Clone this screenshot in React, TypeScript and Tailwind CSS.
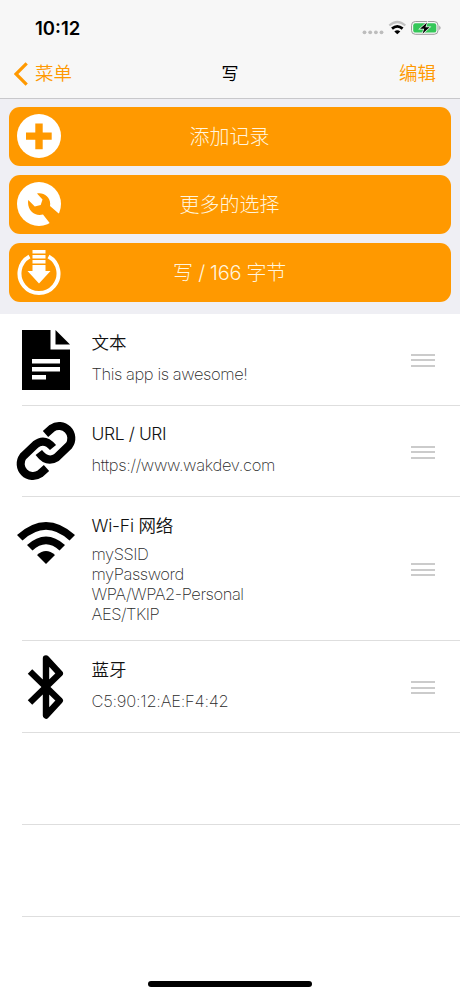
import type { ReactNode } from "react";

function PlusIcon() {
  return (
    <svg viewBox="0 0 44 44" className="size-11">
      <circle cx="22" cy="22" r="22" fill="#fff" />
      <path d="M18.3 9.5h7.4v9.1h9v7.2h-9v9.4h-7.4v-9.4H9v-7.2h9.3z" fill="#ff9900" />
    </svg>
  );
}

function WrenchIcon() {
  return (
    <svg viewBox="0 0 44 44" className="size-11">
      <circle cx="22" cy="22" r="22" fill="#fff" />
      <path d="M20 11.500C27 10 34.500 15.500 33 24L44.500 34 35 44 26 32.500C17.500 35 9.500 27.500 11.300 18L17.800 24.500 23.700 23 25.500 17.500z" fill="#ff9900" />
    </svg>
  );
}

function DownloadIcon() {
  return (
    <svg viewBox="0 0 44 46" className="h-[46px] w-11">
      <path d="M12.500 6.500A19.500 19.500 0 1 0 31.500 6.500" fill="none" stroke="#fff" strokeWidth="4" />
      <path d="M15.500 0h13v3.500h-13zM15.500 5h13v3.500h-13zM15.500 10h13v3.500h-13zM15.500 15h13v6H33.500L22 33.500 10.500 21h5z" fill="#fff" />
    </svg>
  );
}

function DocIcon() {
  return (
    <svg viewBox="0 0 48 60" className="ml-[22px] mt-4 h-[60px] w-12">
      <path d="M0 0h28.500v19.500H48V60H0z" />
      <path d="M33.500 0 48 14.500H33.500z" />
      <path d="M10 29h28v4.500H10zM10 37h28v4.500H10zM10 45h14v4.500H10z" fill="#fff" />
    </svg>
  );
}

function LinkIcon() {
  return (
    <svg viewBox="0 0 60 60" className="ml-4 mt-[15px] size-[60px]" fill="none" stroke="#000" strokeWidth="8">
      <path d="M29.500 13 36 7.200A12.300 12.300 0 0 1 53 24.500L40.500 36.500Q31 42.500 22.800 31.500" />
      <path d="M30.500 47 24 52.800A12.300 12.300 0 0 1 7 35.500L19.500 23.500Q28.500 16.500 37 26.500" />
    </svg>
  );
}

function WifiIcon() {
  return (
    <svg viewBox="0 0 58 42" className="ml-[17px] mt-[25px] h-[42px] w-[58px]">
      <path d="M0 13Q29-13 58 13L52.500 18.500Q29-3 5.500 18.500z" />
      <path d="M10 23Q29 6 48 23L42.500 28.500Q29 16 15.500 28.500z" />
      <path d="M20 33Q29 25 38 33L29 42z" />
    </svg>
  );
}

function BluetoothIcon() {
  return (
    <svg viewBox="0 0 38 66" className="ml-[27px] mt-[13px] h-[66px] w-[38px]">
      <path d="M3 17.500 32.800 46.500 19 61.500V4.500L32.800 19.500 3 48.500" fill="none" stroke="#000" strokeWidth="6.400" strokeLinejoin="round" />
    </svg>
  );
}

function StatusIcons() {
  return (
    <svg viewBox="0 0 80 18" className="absolute left-[361px] top-[19px] h-[18px] w-20">
      <g fill="#bdbdbd">
        <circle cx="3.500" cy="13.300" r="1.900" />
        <circle cx="9.200" cy="13.300" r="1.900" />
        <circle cx="14.900" cy="13.300" r="1.900" />
        <circle cx="20.500" cy="13.300" r="1.900" />
      </g>
      <path d="M28.300 6.500Q36.300-.500 44.300 6.500" fill="none" stroke="#c2c2c2" strokeWidth="2.200" />
      <path d="M31 9.600Q36.300 5.200 41.600 9.600" fill="none" stroke="#000" strokeWidth="2.800" />
      <path d="M33.300 12.400Q36.300 10 39.300 12.400L36.300 15.300z" />
      <rect x="50.500" y="2.500" width="26.500" height="12.800" rx="3.800" fill="#f7f7f7" stroke="#9c9c9c" />
      <rect x="52.200" y="4.200" width="23.100" height="9.400" rx="2.200" fill="#35c759" />
      <path d="M78.300 6.500q2.500 2.300 0 4.600z" fill="#999" />
      <path d="M66 3.500 59 9.800h4.200l-1.700 5 7.100-6.600h-4.200z" fill="#000" stroke="#f7f7f7" strokeWidth="1.400" paintOrder="stroke" />
    </svg>
  );
}

function ActionButton({ icon, children }: { icon: ReactNode; children: ReactNode }) {
  return (
    <button className="relative flex h-[59px] w-full items-center justify-center rounded-[11px] bg-[#ff9900] pr-px pt-px text-[20px] font-light text-[#fff5df]">
      <span className="absolute left-2 top-[7px]">{icon}</span>
      {children}
    </button>
  );
}

function Row({ icon, title, lines, tracking, tall }: { icon: ReactNode; title: ReactNode; lines: string[]; tracking: string; tall?: boolean }) {
  return (
    <li className={tall ? "flex h-36" : "flex h-[91.700px]"}>
      <div className="w-[91.500px] shrink-0">{icon}</div>
      <div className="flex-1 whitespace-nowrap">
        <div className="mt-[16.500px] h-[23px] text-[17.500px] font-[350] leading-[23px] text-[#111]">{title}</div>
        <div className={`text-[16.500px] font-extralight leading-5 text-[#2a2a2a] ${tall ? "mt-[7px]" : "mt-[10px]"} ${tracking}`}>
          {lines.map((line) => (
            <div key={line}>{line}</div>
          ))}
        </div>
      </div>
      <div className="mr-[25px] flex w-6 flex-col justify-center gap-[3.500px] pt-px">
        <i className="h-[2px] bg-[#cbcbcb]" />
        <i className="h-[2px] bg-[#cbcbcb]" />
        <i className="h-[2px] bg-[#cbcbcb]" />
      </div>
    </li>
  );
}

const Divider = () => <div className="-mt-px ml-[22px] h-px bg-[#dedede]" />;

export default function App() {
  return (
    <div className="relative flex h-[996px] w-[460px] flex-col overflow-hidden bg-white font-['Inter','Noto_Sans_CJK_SC',sans-serif]">
      <header className="h-[99px] border-b border-[#c8c8cb] bg-[#f7f7f7]">
        <div className="h-12 pl-[35px] pt-[17px] text-[18.500px] font-semibold leading-[23px]">10:12</div>
        <StatusIcons />
        <nav className="grid h-[50px] grid-cols-3 items-center pt-0.5 text-[18.500px] font-[350]">
          <span className="flex items-center pl-[14px] text-[#ff9900]">
            <svg viewBox="0 0 14 24" className="mr-[7px] h-6 w-3.5" fill="none" stroke="#ff9900" strokeWidth="3.200">
              <path d="M12.700 1.300 2 12l10.700 10.700" />
            </svg>
            菜单
          </span>
          <span className="pt-px text-center text-[17px] font-normal">写</span>
          <span className="pr-6 text-right text-[#ff9900]">编辑</span>
        </nav>
      </header>
      <section className="flex h-[215px] flex-col gap-[9px] bg-[#efeff4] px-[9px] pt-2">
        <ActionButton icon={<PlusIcon />}>添加记录</ActionButton>
        <ActionButton icon={<WrenchIcon />}>更多的选择</ActionButton>
        <ActionButton icon={<DownloadIcon />}>
          <span className="tracking-[-0.3px]">写 / 166 字节</span>
        </ActionButton>
      </section>
      <ul>
        <Row icon={<DocIcon />} title="文本" lines={["This app is awesome!"]} tracking="tracking-[-0.42px]" />
        <Divider />
        <Row
          icon={<LinkIcon />}
          title={<span className="tracking-[-0.4px]">URL / URI</span>}
          lines={["https://www.wakdev.com"]}
          tracking="tracking-[-0.32px]"
        />
        <Divider />
        <Row
          icon={<WifiIcon />}
          title={<span className="tracking-[-0.2px]">Wi-Fi 网络</span>}
          lines={["mySSID", "myPassword", "WPA/WPA2-Personal", "AES/TKIP"]}
          tracking="tracking-[-0.45px]"
          tall
        />
        <Divider />
        <Row icon={<BluetoothIcon />} title="蓝牙" lines={["C5:90:12:AE:F4:42"]} tracking="tracking-[-0.23px]" />
        <Divider />
      </ul>
      <div className="h-[92px]" />
      <Divider />
      <div className="h-[92px]" />
      <Divider />
      <div className="absolute bottom-[9px] left-[148px] h-[6px] w-[164px] rounded-full bg-black" />
    </div>
  );
}
